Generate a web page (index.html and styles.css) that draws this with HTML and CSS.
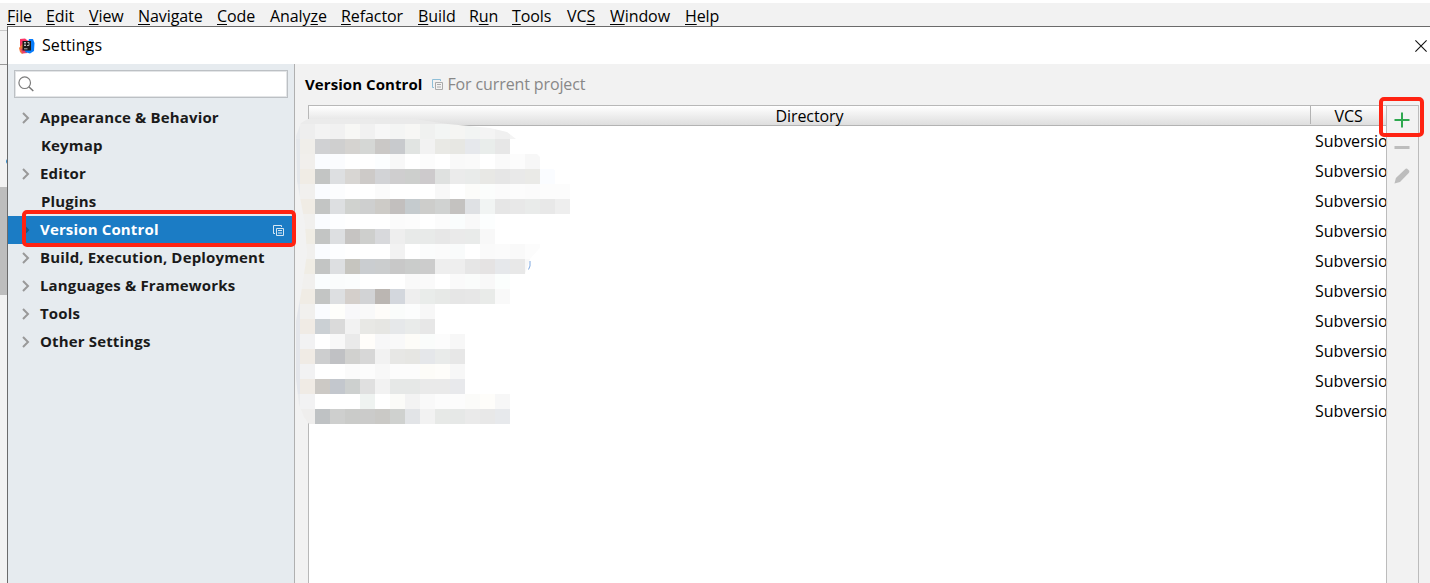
FILE: index.html
```html
<!DOCTYPE html>
<html>
  <head>
    <meta charset="utf-8">
    <title>Settings</title>
    <link rel="stylesheet" href="styles.css">
  </head>
  <body>
    <nav class="menu">
      <span><u>F</u>ile</span>
      <span><u>E</u>dit</span>
      <span><u>V</u>iew</span>
      <span><u>N</u>avigate</span>
      <span><u>C</u>ode</span>
      <span>Analy<u>z</u>e</span>
      <span><u>R</u>efactor</span>
      <span><u>B</u>uild</span>
      <span>R<u>u</u>n</span>
      <span><u>T</u>ools</span>
      <span>VC<u>S</u></span>
      <span><u>W</u>indow</span>
      <span><u>H</u>elp</span>
    </nav>
    <div class="main">
      <div class="strip">
        <div class="strip-a"></div>
        <div class="strip-b"></div>
        <div class="strip-c"><i class="dot"></i></div>
        <div class="strip-d"></div>
      </div>
      <div class="dialog">
        <div class="title">
          <svg class="logo" width="16" height="16" viewBox="0 0 16 16">
            <path d="M1 1l5-.5 4 3-3 6-6-1z" fill="#fc3566"/>
            <path d="M0 10l4-5 5 7-6 4-2-2z" fill="#f4793a"/>
            <path d="M1.5 11l4-1 3 5-5 .5z" fill="#e8406b"/>
            <path d="M10 1l4 0 1.5 4-.5 8-4 2.5-5-1.5z" fill="#087cfa"/>
            <path d="M3.5 3h8.500v9.500H3.500z" fill="#1a1a1a"/>
            <path d="M5 4.5h2M6 4.5v3M5 7.5h2M8.500 4.5h1.500v3H8M5 10.800h3.500" stroke="#ddd" stroke-width=".8" fill="none"/>
          </svg>
          <span>Settings</span>
          <svg class="close" width="12" height="12" viewBox="0 0 12 12">
            <path d="M.4.4l11.2 11.2M11.6.4L.4 11.6" stroke="#111" stroke-width="1.1"/>
          </svg>
        </div>
        <div class="wrap">
          <div class="side">
            <div class="search">
              <svg width="16" height="16" viewBox="0 0 16 16">
                <path d="M10.8 10.8L15.3 15" stroke="#777" stroke-width="1.5"/>
                <circle cx="6.7" cy="6.7" r="5.8" stroke="#7d7d7d" stroke-width="1.2" fill="none"/>
              </svg>
            </div>
            <ul class="tree">
              <li><svg class="arr" viewBox="0 0 8 12"><path d="M1 1l5 5-5 5"/></svg><span>Appearance &amp; Behavior</span></li>
              <li class="leaf"><span>Keymap</span></li>
              <li><svg class="arr" viewBox="0 0 8 12"><path d="M1 1l5 5-5 5"/></svg><span>Editor</span></li>
              <li class="leaf"><span>Plugins</span></li>
              <li class="on">
                <svg class="arr" viewBox="0 0 8 12"><path d="M1 1l5 5-5 5"/></svg><span>Version Control</span>
                <svg class="copy" width="11" height="11" viewBox="0 0 11 11"><path d="M2 8.5H.5v-8h8V2M3.5 3.5h7v7h-7zM5 5.5h4M5 8h4" stroke="#d5e6f3" fill="none"/></svg>
                <div class="mark"></div>
              </li>
              <li><svg class="arr" viewBox="0 0 8 12"><path d="M1 1l5 5-5 5"/></svg><span>Build, Execution, Deployment</span></li>
              <li><svg class="arr" viewBox="0 0 8 12"><path d="M1 1l5 5-5 5"/></svg><span>Languages &amp; Frameworks</span></li>
              <li><svg class="arr" viewBox="0 0 8 12"><path d="M1 1l5 5-5 5"/></svg><span>Tools</span></li>
              <li><svg class="arr" viewBox="0 0 8 12"><path d="M1 1l5 5-5 5"/></svg><span>Other Settings</span></li>
            </ul>
          </div>
          <div class="content">
            <div class="head">
              <b>Version Control</b>
              <svg width="11" height="11" viewBox="0 0 11 11"><path d="M2 8.5H.5v-8h8V2" stroke="#8fbfd8" fill="none"/><path d="M3.5 3.5h7v7h-7zM5 5.5h4M5 8h4" stroke="#aaa" fill="none"/></svg>
              <span>For current project</span>
            </div>
            <div class="panel">
              <div class="table">
                <div class="thead"><div class="dir">Directory</div><div class="vcs">VCS</div></div>
                <ul class="rows">
                  <li>Subversio</li>
                  <li>Subversio</li>
                  <li>Subversio</li>
                  <li>Subversio</li>
                  <li>Subversio</li>
                  <li>Subversio</li>
                  <li>Subversio</li>
                  <li>Subversio</li>
                  <li>Subversio</li>
                  <li>Subversio</li>
                </ul>
              </div>
              <div class="tools">
                <svg width="16" height="16" viewBox="0 0 16 16"><path d="M8 .5v15M.5 8h15" stroke="#2fa84f" stroke-width="2"/></svg>
                <svg width="16" height="16" viewBox="0 0 16 16"><path d="M.5 7.5h15" stroke="#bdbdbd" stroke-width="3"/></svg>
                <svg width="16" height="16" viewBox="0 0 16 16"><path d="M.5 15.5l1.400-5.500L10.800 1.500q1.200-1.200 2.400-.8l2.100 2.100q.4 1.200-.8 2.400L6 14z" fill="#bdbdbd"/></svg>
                <div class="mark"></div>
              </div>
              <div class="mosaic" id="mosaic"></div>
              <svg class="speck" width="3" height="9" viewBox="0 0 3 9"><path d="M2 0v5L.5 8.5" stroke="#7fa8e0" fill="none"/></svg>
            </div>
          </div>
        </div>
      </div>
    </div>
    <script src="mosaic.js"></script>
  </body>
</html>
```
FILE: styles.css
```css
* {
    margin: 0;
    padding: 0;
    box-sizing: border-box;
}
html, body {
    height: 100%;
}
body {
    display: flex;
    flex-direction: column;
    overflow: hidden;
    background: #f2f2f2;
    font: 16px "Open Sans", "Noto Sans", sans-serif;
    letter-spacing: -.08px;
    color: #000;
}
ul {
    list-style: none;
}
svg {
    flex: none;
}
.menu {
    display: grid;
    grid-template-columns: 39px 43px 49px 79px 53px 71px 77px 51px 43px 55px 43px 75px 50px;
    height: 26px;
    padding-left: 7px;
    border-top: 3px solid #fff;
    line-height: 27px;
    white-space: nowrap;
}
.menu u {
    text-underline-offset: 2px;
    text-decoration-thickness: 1px;
    text-decoration-skip-ink: none;
}
.main {
    display: flex;
    flex: 1;
    min-height: 0;
}
.strip {
    width: 7px;
}
.strip-a {
    height: 5px;
    border-bottom: 1px solid #c8c8c8;
}
.strip-b {
    height: 34px;
    border-bottom: 1px solid #999;
}
.strip-c {
    height: 122px;
    padding-top: 94px;
    overflow: hidden;
}
.dot {
    display: block;
    width: 5px;
    height: 5px;
    margin-left: 6px;
    border-radius: 50%;
    background: #3d8fc9;
}
.strip-d {
    height: 108px;
    background: #bdbdbd;
}
.dialog {
    display: flex;
    flex: 1;
    flex-direction: column;
    min-width: 0;
    border-top: 1px solid #6b6b6b;
    border-left: 1px solid #6b6b6b;
}
.title {
    display: flex;
    align-items: center;
    height: 37px;
    padding: 0 3px 0 11px;
    background: #fff;
}
.title span {
    flex: 1;
    margin-left: 7px;
    padding-bottom: 2px;
    letter-spacing: .1px;
}
.wrap {
    display: flex;
    flex: 1;
}
.side {
    width: 287px;
    padding-top: 6px;
    border-right: 1px solid #b0b0b0;
    background: #e6ebef;
}
.search {
    display: flex;
    align-items: center;
    width: 274px;
    height: 28px;
    margin-left: 6px;
    padding-left: 3px;
    border: 1px solid #bcc0c4;
    background: #fff;
    box-shadow: inset 0 0 0 1px #e3e5e7;
}
.tree {
    padding-top: 6px;
    font-weight: 700;
    font-size: 15px;
    letter-spacing: .15px;
    color: #1a1a1a;
}
.tree li {
    display: flex;
    align-items: center;
    height: 28px;
    padding-left: 14px;
    white-space: nowrap;
}
.tree span {
    padding-bottom: 2px;
}
.tree .leaf {
    padding-left: 33px;
}
.arr {
    width: 8px;
    height: 12px;
    margin-right: 10px;
    fill: none;
    stroke: #999;
    stroke-width: 2;
}
.tree .on {
    position: relative;
    background: #1b7cc5;
    color: #fff;
}
.on .arr {
    stroke: #185785;
}
.copy {
    margin-left: auto;
    margin-right: 10px;
}
.mark {
    position: absolute;
    border: 4px solid #ff2312;
    border-radius: 5px;
}
.on .mark {
    z-index: 3;
    top: -6px;
    left: 14px;
    width: 274px;
    height: 37px;
}
.content {
    display: flex;
    flex: 1;
    flex-direction: column;
    min-width: 0;
    padding: 0 11px 0 13px;
}
.head {
    display: flex;
    align-items: center;
    height: 41px;
    margin-left: -3px;
    color: #888;
}
.head b {
    margin-right: 10px;
    padding-bottom: 2px;
    font-weight: 700;
    font-size: 15px;
    letter-spacing: .07px;
    color: #000;
}
.head span {
    margin-left: 4px;
    padding-bottom: 2px;
    letter-spacing: -.12px;
}
.panel {
    position: relative;
    display: flex;
    flex: 1;
}
.table {
    display: flex;
    flex: 1;
    flex-direction: column;
    min-width: 0;
    border-top: 1px solid #b8b8b8;
    border-left: 1px solid #b8b8b8;
    background: #fff;
}
.thead {
    display: flex;
    height: 20px;
    border-bottom: 1px solid #b3b3b3;
    background: linear-gradient(#fff, #dedede);
    line-height: 21px;
    text-align: center;
}
.dir {
    flex: 1;
}
.vcs {
    width: 76px;
    height: 18px;
    border-left: 1px solid #b3b3b3;
}
.rows {
    align-self: flex-end;
    width: 71px;
}
.rows li {
    height: 30px;
    line-height: 30px;
}
.tools {
    position: relative;
    display: flex;
    flex-direction: column;
    align-items: center;
    gap: 12px;
    width: 33px;
    padding: 6px 1px 0 0;
    border: 1px solid #bcbcbc;
    border-bottom: 0;
}
.tools .mark {
    top: -9px;
    left: -8px;
    width: 45px;
    height: 40px;
}
/* blurred directory names, 15px blocks */
.mosaic {
    position: absolute;
    top: 4px;
    left: -23px;
    display: grid;
    grid-template-columns: repeat(19, 15px);
    grid-auto-rows: 15px;
    clip-path: polygon(23px 10px, 130px 10px, 163px 15px, 205px 19px, 222px 23px, 231px 30px, 252px 45px, 255px 48px, 285px 75px, 285px 105px, 245px 150px, 240px 165px, 225px 315px, 24px 315px, 19px 308px, 14px 295px, 11px 270px, 11px 212px, 16px 185px, 22px 145px, 20px 115px, 12px 72px, 11px 27px, 16px 14px);
}
.speck {
    position: absolute;
    top: 156px;
    left: 220px;
}
```
FILE: mosaic.js
```js
(function() {
    // one string per line of blocks, left to right
    var rows = [
        'eaeaea ebebeb ebebeb ebebeb ebebeb ebebeb eaeaea eaeaea eaeaea eaeaea e9e9e9 e9e9e9 e9e9e9 e9e9e9 e9e9e9',
        'e8eaed eeeeee f3f3f3 f1f1f1 f7f7f5 f1f1f1 f7f7f7 f4f5f4 f7f7f5 f0f1f0 f3f5f4 f5f5f3 f2f4f3 f4f4f4 f0f0f0 f4f4f4',
        'e4e7eb f0eeea d0d1d3 cfcfcf d5d3d0 d5d7d5 cac8c6 c8cacd e1e4e2 f2f2f2 e9e9e5 e7e7e3 e6e8ec e9edeb e7e7e7',
        'e4e7eb f1efec fafcff fbfcfe ffffff ffffff fcfeff f8f8f8 ffffff fcfcfc ffffff f9f9f9 fafafa ffffff fafafa fcfcfc f7f7f7',
        'e4e7eb f0ece5 c3c5c4 dddfe1 d8d6d3 cdcac8 d2d3d6 cfcecf cdcfcd cdcacc dfe1e0 ebebeb e9ebea e8e8e5 e6e6e6 e9e9e9 eaeae7 fafcff',
        'e8eaed f1f0ee fafcff fcfdfe ffffff ffffff fbfbfb ffffff ffffff ffffff f8f8f8 ffffff fcfcfa fbfdfc fbfbfb fcfcfc fbfbfb fcfcfc fcfcfc',
        'e8eaed f0ece5 c3c5c4 dddfe1 d0d2cf cecfcf cdcbc7 c2bfbe c5cbce cdcdcb d0d2d1 c4c2c0 dfe1e4 f1f4f3 e6e6e6 e8e8e8 e9ebea e8e8e8 eeeeee',
        'e8eaed f1f0ee fafcff fdfeff ffffff ffffff ffffff fbfbfb fcfcfc ffffff fcfcfc fafdfd f9f9f9 fcfefe',
        'e8eaed f0ede5 c3c5c4 dddfe1 c6c4c2 cecfcd d8d9dc eeeeee e8eae9 e8eae9 e7e7e7 eaeaea e9ebea f8f8f8',
        'e8eaed f1f0ee fafcff fdfeff ffffff ffffff ffffff f2f2f2 ffffff fbfcfc fbfbfb f9fbfb ffffff fafafa fbfbfb f9f9f9 fcfcfc',
        'e8eaed f0ede5 c3c5c4 dddfe1 c6c5bf cacdd0 cbcdce c8c8c8 cacccb cccccc eeeeee eeeeee e6e6e6 e5e3e3 e6e8eb e8e8e8 f8f8f8',
        'e8eaed f1f0ee fafdfe fafcfc fbfdfd ffffff ffffff ffffff f9f9f9 fafafa ffffff fafafa fafcfb f8f8f8 fbfefd',
        'e4e7eb f0ece5 c3c5c4 dddfe1 d4cfcb d2d3d5 bbb6b2 d3d7dd eeeeee e9ecea e7e9e7 e6e6e6 e7e7e7 e9ebe9 f9f9f9',
        'e4e6eb f1f0ee fafcff fefefb f8f8fa f9f9f9 fefcf9 fafcfb fcfdfd f7f7f7',
        'e4e6eb f0ebe5 cbd0d4 dadada f2f2f2 e8e8e5 e6e6e3 e6e8ea e9ebea e7e7e7',
        'e4e6eb f2f2f3 ffffff f8f8f8 eaeaea fffdfa f7f7f8 f9f9f9 fdfcf8 fafcfb fcfcfc f7f7f7',
        'e4e6eb f0ebe5 cdcecf c0c1c4 d1d1cf d7d7d7 f2f2f2 e7e7e5 e6e6e3 e5e7ea e9ebea e7e7e7',
        'e4e6eb f2f2f3 ffffff ffffff fbfbfb fcfcfc f8f8f8 fcfcfc fcfcfc fdfcf8 fefdfa f7f7f7',
        'e4e6eb f0ebe5 ccc9c5 c3c7cd cdd0cf e0e0e0 f2f2f2 e6e8e7 e6e8e7 eaeaea eaeaea e8e9ec',
        'eaebed f2f2f3 ffffff ffffff ffffff eff3f1 ffffff fbfbf8 f3f3f3 f9f9f9 fcfcfc fcfcfc fbfbf9 fefdfa f7f7f7',
        'eaebed efeeed bfc2c4 cecfce cacbc9 cbcbca cac9c6 cfd1cf e2e4e7 f2f2f2 e7e9e7 e6e8e7 eaeaea e8e8e8 e7e9ec'
    ];
    var mosaic = document.getElementById('mosaic');

    for (var i = 0; i < rows.length; i++) {
        var cells = rows[i].split(' ');
        for (var j = 0; j < cells.length; j++) {
            var cell = document.createElement('i');
            cell.style.background = '#' + cells[j];
            cell.style.gridArea = (i + 1) + ' / ' + (j + 1);
            mosaic.appendChild(cell);
        }
    }
})();
```
